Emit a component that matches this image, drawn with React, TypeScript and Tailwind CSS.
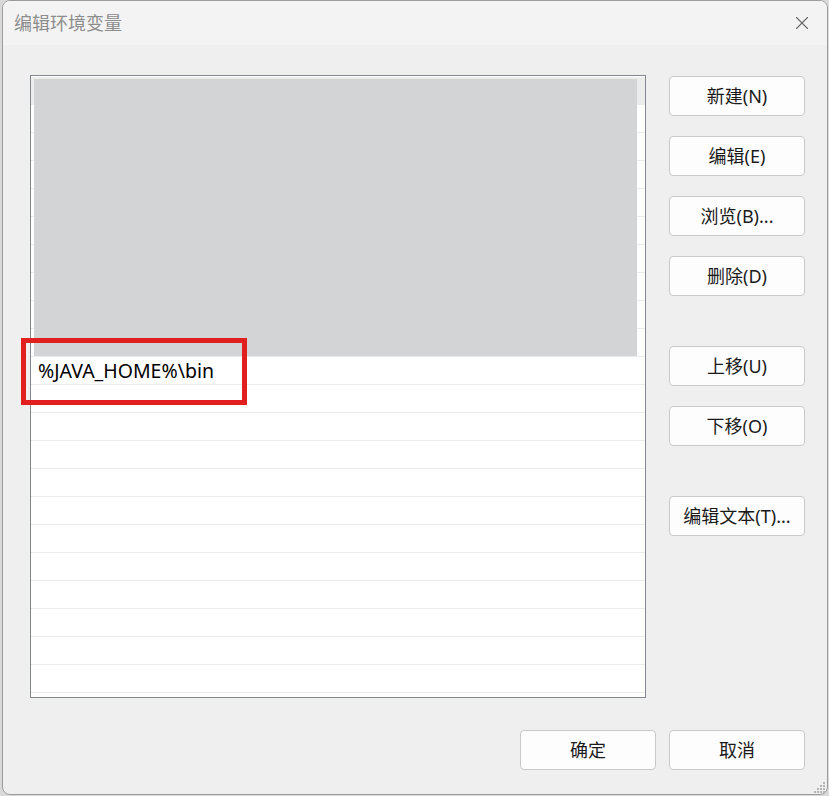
import { X } from 'lucide-react';

const font = { fontFamily: '"Segoe UI", "Noto Sans", "Noto Sans CJK SC", sans-serif' };

const topButtons = [
  { label: '新建(N)', gap: 'mt-0' },
  { label: '编辑(E)', gap: 'mt-5' },
  { label: '浏览(B)...', gap: 'mt-5' },
  { label: '删除(D)', gap: 'mt-5' },
  { label: '上移(U)', gap: 'mt-[50px]' },
  { label: '下移(O)', gap: 'mt-5' },
  { label: '编辑文本(T)...', gap: 'mt-[50px]' },
];

const Btn = ({ label, className = '' }: { label: string; className?: string }) => (
  <button
    className={`h-10 w-[136px] rounded-[4px] border border-[#c9c9c9] bg-[#fdfdfd] text-[18px] text-[#1a1a1a] ${className}`}
  >
    {label}
  </button>
);

const rows = Array.from({ length: 23 }, (_, i) => i);

export default function App() {
  return (
    <div className="h-[796px] w-[829px] overflow-hidden bg-[#d9d9d9] pl-[2px]" style={font}>
      <div className="relative flex h-[795px] w-[826px] flex-col overflow-hidden rounded-[8px] border border-[#9c9c9c] bg-[#efefef]">
        {/* title bar */}
        <div className="flex h-[44px] items-center justify-between bg-[#f3f3f3] pl-[11px] pr-[14px]">
          <span className="text-[18px] text-[#8d8d8d]">编辑环境变量</span>
          <X className="h-[22px] w-[22px] text-[#6a6a6a]" strokeWidth={1.2} />
        </div>

        <div className="flex flex-1 flex-col pl-[27px] pr-[22px]">
          <div className="mt-[30px] flex gap-[23px]">
            {/* list */}
            <div className="relative h-[623px] w-[616px] overflow-hidden border border-[#828790] bg-white pt-[1px]">
              {rows.map((i) => (
                <div
                  key={i}
                  className={`flex h-[28px] items-center border-b border-[#ebebeb] pl-[7px] text-[19.5px] text-black ${i === 0 ? 'bg-[#ececec]' : ''}`}
                >
                  {i === 10 ? '%JAVA_HOME%\\bin' : ''}
                </div>
              ))}
              <div className="absolute left-[3px] top-[3px] h-[277px] w-[603px] bg-[#d3d4d6]" />
            </div>

            {/* side buttons */}
            <div className="flex flex-col pt-[1px]">
              {topButtons.map((b) => (
                <Btn key={b.label} label={b.label} className={b.gap} />
              ))}
            </div>
          </div>

          <div className="mt-[32px] flex justify-end gap-[13px]">
            <Btn label="确定" />
            <Btn label="取消" />
          </div>
        </div>

        {/* resize grip */}
        <svg className="absolute bottom-[1px] right-[1px]" width="12" height="12" viewBox="0 0 12 12">
          {[
            [9, 1], [6, 4], [9, 4], [3, 7], [6, 7], [9, 7], [0, 10], [3, 10], [6, 10], [9, 10],
          ].map(([x, y], i) => (
            <rect key={i} x={x} y={y} width="2" height="2" fill="#b5b5b5" />
          ))}
        </svg>
      </div>

      {/* annotation */}
      <div className="pointer-events-none absolute left-[21px] top-[338px] h-[67px] w-[226px] border-[5px] border-[#e21f1f]" />
    </div>
  );
}
